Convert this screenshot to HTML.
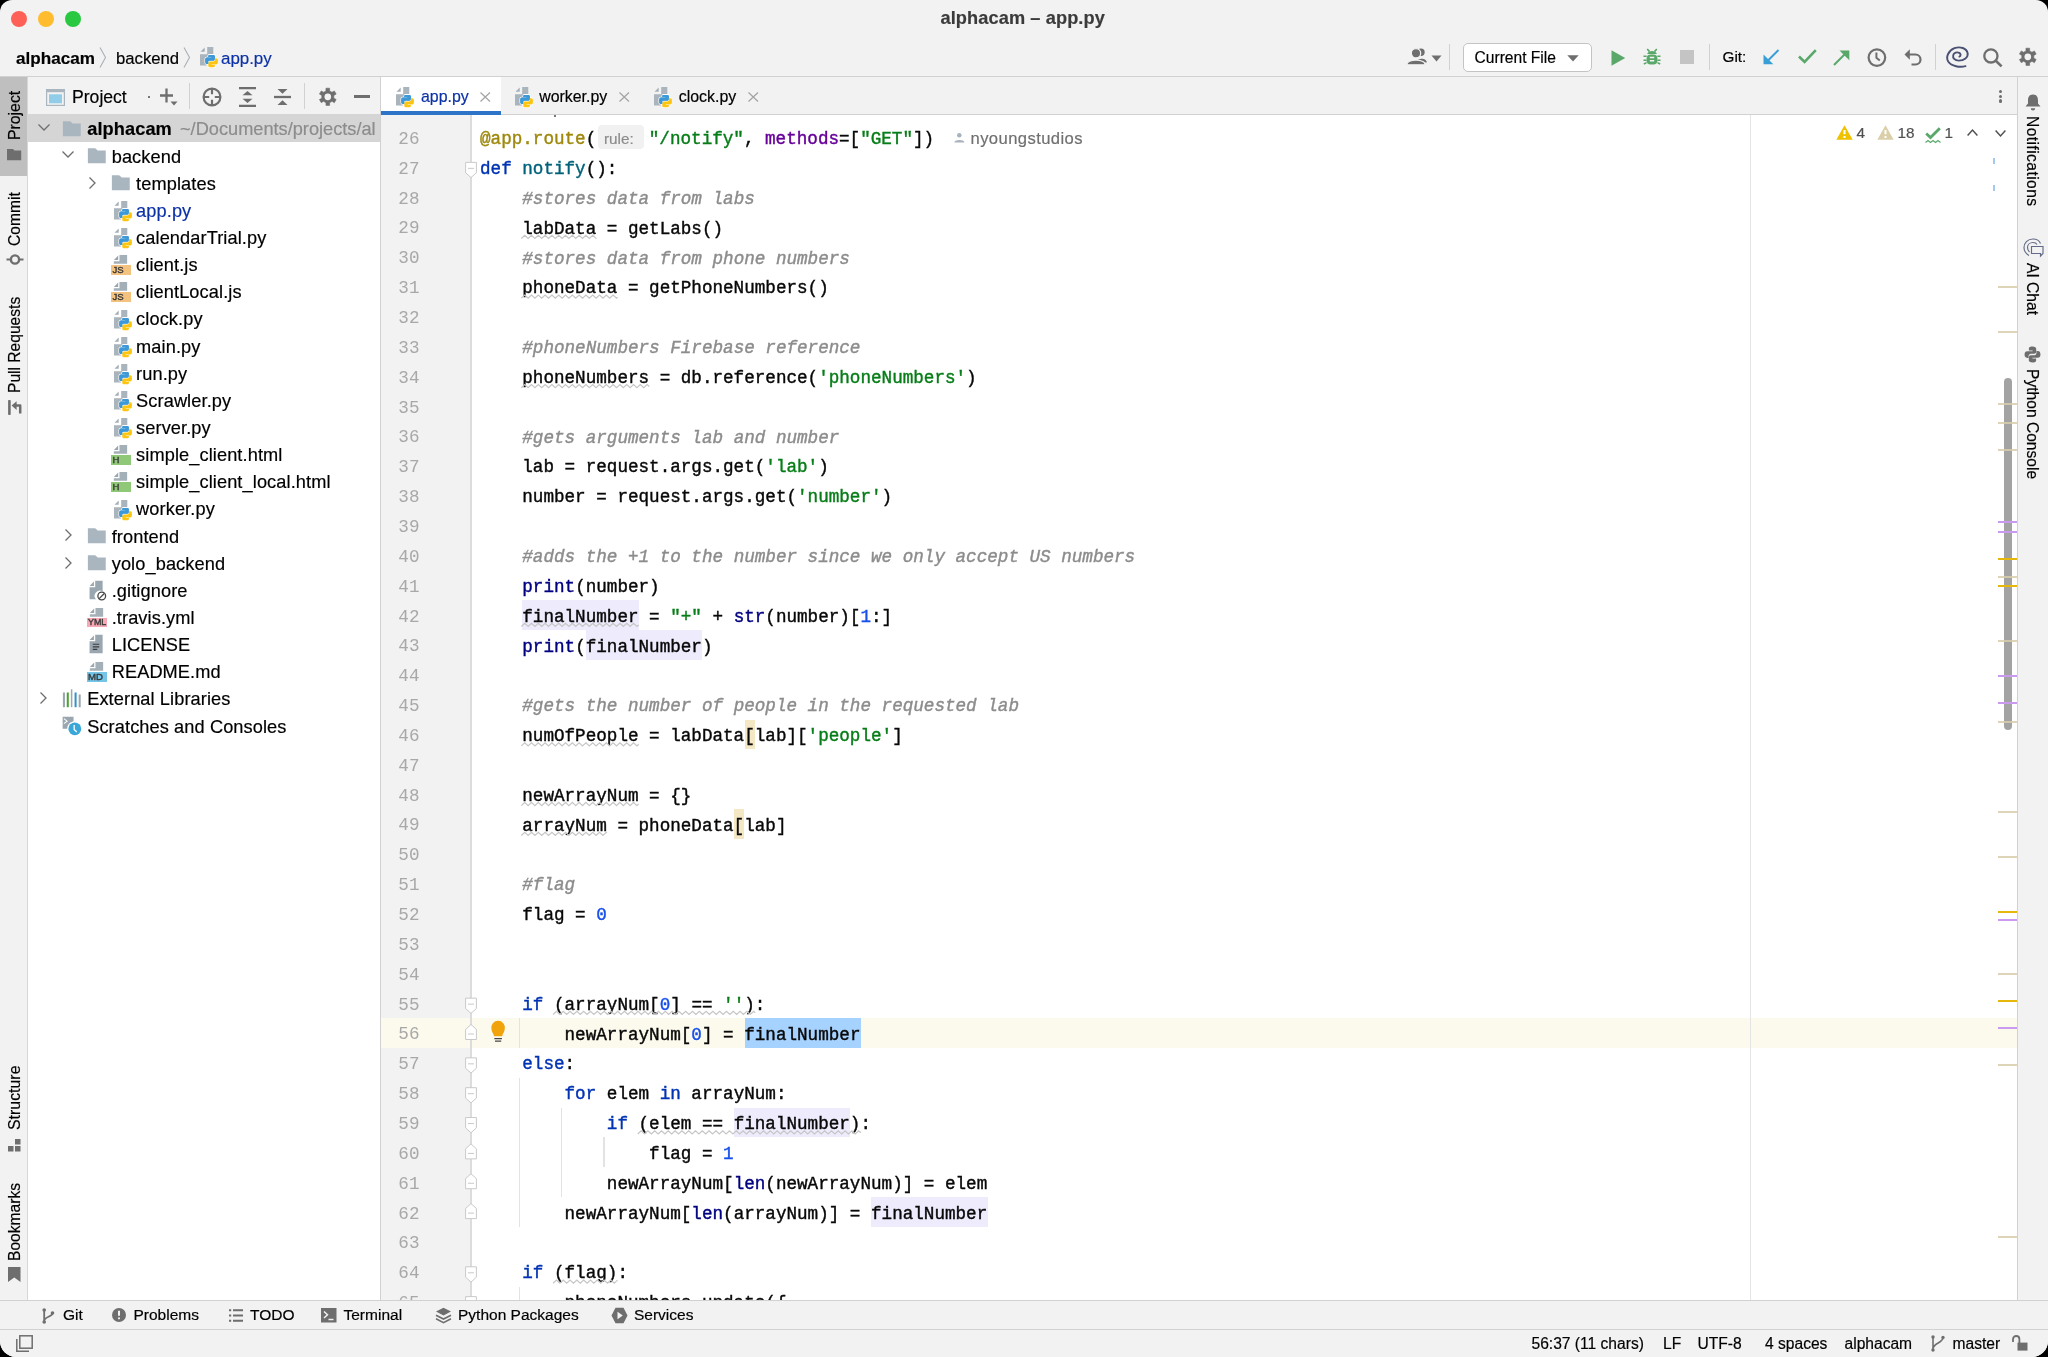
<!DOCTYPE html><html><head><meta charset="utf-8"><style>
*{margin:0;padding:0;box-sizing:border-box}
html,body{width:2048px;height:1357px;overflow:hidden;background:#000}
body{font-family:"Liberation Sans",sans-serif;color:#000;position:relative}
.a{position:absolute}
.win{position:absolute;left:0;top:0;width:2048px;height:1357px;background:#f2f2f2;border-radius:12px 12px 16px 16px;overflow:hidden;will-change:transform}
.t{position:absolute;white-space:pre;line-height:1;-webkit-text-stroke:0.18px currentColor}
.code{-webkit-text-stroke:0.4px currentColor;font-family:"Liberation Mono",monospace;font-size:17.63px;color:#080808;white-space:pre;position:absolute;line-height:29.85px;height:29.85px}
.kw{color:#0033b3}.str{color:#067d17}.num{color:#1750eb}.cm{color:#8c8c8c;font-style:italic}
.dec{color:#9e880d}.fn{color:#00627a}.bi{color:#000080}.kwa{color:#660099}
.ln{font-family:"Liberation Mono",monospace;font-size:17.63px;color:#a3a3a3;position:absolute;white-space:pre;line-height:29.85px;text-align:right;width:40px}
svg{position:absolute;overflow:visible}
</style></head><body><div class="win"><svg width="0" height="0" style="position:absolute">
<defs>
<symbol id="pyf" viewBox="0 0 24 24">
 <path d="M6.5 7.7 L10.7 3.6 V7.7 Z" fill="#a3afb8"/>
 <path d="M13.2 3.1 H19.3 V12 L13 21.6 H6 V10.2 H13.2 Z" fill="#a9b4bc"/>
 <g stroke="#fff" stroke-width="1.6" stroke-linejoin="round" paint-order="stroke">
 <path d="M15.3 10.9 H19.4 Q20.9 10.9 20.9 12.4 V15.3 Q20.9 16.7 19.5 16.7 H15.7 Q14.3 16.7 14.3 18.1 V19.9 H12.8 Q11.3 19.9 11.3 18.2 V15.3 Q11.3 13.6 13 13.6 H17.6 V13.1 H14.3 V12 Q14.3 10.9 15.3 10.9 Z" fill="#3c98d6"/>
 <path d="M19.9 23.2 H15.8 Q14.3 23.2 14.3 21.7 V18.8 Q14.3 17.4 15.7 17.4 H19.5 Q20.9 17.4 20.9 16 V14.2 H22.4 Q23.9 14.2 23.9 15.9 V18.8 Q23.9 20.5 22.2 20.5 H17.6 V21 H20.9 V22.1 Q20.9 23.2 19.9 23.2 Z" fill="#fdc510"/>
 </g>
 <path d="M15.3 10.9 H19.4 Q20.9 10.9 20.9 12.4 V15.3 Q20.9 16.7 19.5 16.7 H15.7 Q14.3 16.7 14.3 18.1 V19.9 H12.8 Q11.3 19.9 11.3 18.2 V15.3 Q11.3 13.6 13 13.6 H17.6 V13.1 H14.3 V12 Q14.3 10.9 15.3 10.9 Z" fill="#3c98d6"/>
</symbol>
<symbol id="fold" viewBox="0 0 16 16">
 <path d="M0.7 1.8 H6.3 Q6.9 1.8 7.3 2.3 L8.5 3.6 H15 V13.8 H0.7 Z" fill="#aab6bf"/>
</symbol>
<symbol id="doc" viewBox="0 0 16 16">
 <path d="M2.2 4.6 L5.6 1.2 V4.6 Z" fill="#9aa7b0"/>
 <path d="M6.6 0.8 H12.6 V7.7 H2.2 V5.6 H6.6 Z" fill="#9aa7b0" fill-opacity=".9"/>
</symbol>
<symbol id="chevR" viewBox="0 0 16 16"><path d="M5.5 2.5 L11 8 L5.5 13.5" fill="none" stroke="#6e6e6e" stroke-width="1.3"/></symbol>
<symbol id="chevD" viewBox="0 0 16 16"><path d="M2.5 5.5 L8 11 L13.5 5.5" fill="none" stroke="#6e6e6e" stroke-width="1.3"/></symbol>
</defs></svg><div class="a" style="left:10.7px;top:10.5px;width:16.6px;height:16.6px;border-radius:50%;background:#fe5f57"></div><div class="a" style="left:37.7px;top:10.5px;width:16.6px;height:16.6px;border-radius:50%;background:#febc2e"></div><div class="a" style="left:64.7px;top:10.5px;width:16.6px;height:16.6px;border-radius:50%;background:#28c840"></div><div class="t" style="left:940.5px;top:9px;font-size:18.2px;letter-spacing:0.1px;font-weight:bold;color:#3b3b3b">alphacam – app.py</div><div class="t" style="left:16px;top:49.5px;font-size:17.1px;font-weight:bold;color:#000">alphacam</div><svg style="left:99px;top:47px" width="8" height="21" viewBox="0 0 8 21"><path d="M1 0.5 L6.5 10.5 L1 20.5" fill="none" stroke="#a8b0b8" stroke-width="1.1"/></svg><div class="t" style="left:116px;top:51px;font-size:16.7px;color:#000">backend</div><svg style="left:183px;top:47px" width="8" height="21" viewBox="0 0 8 21"><path d="M1 0.5 L6.5 10.5 L1 20.5" fill="none" stroke="#a8b0b8" stroke-width="1.1"/></svg><svg style="left:193.5px;top:44.4px" width="24" height="24"><use href="#pyf"/></svg><div class="t" style="left:221px;top:50.5px;font-size:16.9px;color:#0b31a6">app.py</div><div class="a" style="left:0;top:76px;width:2048px;height:1px;background:#d1d1d1"></div><svg style="left:1406px;top:48px" width="22" height="18" viewBox="0 0 22 18"><circle cx="15" cy="4.2" r="3.7" fill="#6e6e6e"/><path d="M11 14 C11 9.5 20.8 9.5 20.8 14.5 Z" fill="#6e6e6e"/><circle cx="10" cy="5.3" r="4.7" fill="#6e6e6e" stroke="#f2f2f2" stroke-width="1.3"/><path d="M0.8 16.8 C0.8 10.5 19.2 10.5 19.2 16.8 Z" fill="#6e6e6e" stroke="#f2f2f2" stroke-width="1.3"/></svg><svg style="left:1431px;top:55px" width="11" height="7" viewBox="0 0 11 7"><path d="M0.5 0.5 H10.5 L5.5 6.5 Z" fill="#6e6e6e"/></svg><div class="a" style="left:1448.5px;top:44px;width:1px;height:26px;background:#d1d1d1"></div><div class="a" style="left:1462.5px;top:42.5px;width:129px;height:29px;border:1px solid #c4c4c4;border-radius:5px;background:#fff"></div><div class="t" style="left:1474.5px;top:50px;font-size:15.6px;color:#000">Current File</div><svg style="left:1567px;top:54.5px" width="12" height="7" viewBox="0 0 12 7"><path d="M0.3 0.3 H11.7 L6 6.6 Z" fill="#6e6e6e"/></svg><svg style="left:1610.5px;top:49.5px" width="15" height="16" viewBox="0 0 15 16"><path d="M0.5 0.2 L14.2 8 L0.5 15.8 Z" fill="#59a869"/></svg><svg style="left:1643px;top:48px" width="18" height="18" viewBox="0 0 18 18"><path d="M4.2 1 L6.5 3.6 M13.8 1 L11.5 3.6" stroke="#59a869" stroke-width="1.6"/><path d="M9 3 C5 3 4.2 6 4.2 6 H13.8 C13.8 6 13 3 9 3Z" fill="#59a869"/><rect x="3.6" y="6.6" width="10.8" height="10" rx="4" fill="#59a869"/><path d="M0.5 8.2 H3.6 M0.5 12.2 H3.6 M0.8 16 L3.6 14.6 M14.4 8.2 H17.5 M14.4 12.2 H17.5 M17.2 16 L14.4 14.6" stroke="#59a869" stroke-width="1.5"/><path d="M6.8 9.6 H11.2 M6.8 12.8 H11.2" stroke="#f2f2f2" stroke-width="1.5"/></svg><div class="a" style="left:1680px;top:50px;width:14.3px;height:13.8px;background:#c4c4c4"></div><div class="a" style="left:1709px;top:44px;width:1px;height:26px;background:#d1d1d1"></div><div class="t" style="left:1722.5px;top:49px;font-size:15.3px;color:#000">Git:</div><svg style="left:1763px;top:49px" width="17" height="16" viewBox="0 0 17 16"><path d="M15.5 1 L3.5 13" stroke="#389fd6" stroke-width="2"/><path d="M0.5 5.5 V15.3 H10.3 Z" fill="#389fd6"/></svg><svg style="left:1798px;top:49px" width="19" height="15" viewBox="0 0 19 15"><path d="M1 7.5 L6.6 13 L17.8 1.2" fill="none" stroke="#59a869" stroke-width="2.6"/></svg><svg style="left:1833px;top:49.5px" width="17" height="16" viewBox="0 0 17 16"><path d="M1 15 L13 3" stroke="#59a869" stroke-width="2"/><path d="M16.3 0.5 V10.3 L6.5 0.5 Z" fill="#59a869"/></svg><svg style="left:1867px;top:47.5px" width="20" height="20" viewBox="0 0 20 20"><circle cx="9.9" cy="9.6" r="8.3" fill="none" stroke="#6e6e6e" stroke-width="2.2"/><path d="M9.4 4.6 V9.8 L12.8 12.6" fill="none" stroke="#6e6e6e" stroke-width="2"/></svg><svg style="left:1904px;top:48px" width="19" height="18" viewBox="0 0 19 18"><path d="M4.8 6.5 H11.5 A5 5 0 0 1 11.5 16.5 H7.5" fill="none" stroke="#6e6e6e" stroke-width="2.2"/><path d="M0.5 6.5 L5.8 1.2 V11.8 Z" fill="#6e6e6e"/></svg><div class="a" style="left:1934.5px;top:43.5px;width:1px;height:26px;background:#d1d1d1"></div><svg style="left:1945.5px;top:46px" width="23" height="22" viewBox="0 0 23 22"><path d="M19.5 20.2 C14 21.5 5.5 20.5 2.2 15.5 C-0.5 11 2.5 4.5 8.5 2.2 C14 0.2 20.5 2 21.6 7 C22.5 11.5 18 14.6 12.8 14.6 C8.5 14.6 6.6 12 7.2 9.2 C7.8 6.6 11 5.8 13.2 6.8 C15 7.6 15 10 13.4 10.6" fill="none" stroke="#4a5173" stroke-width="1.9" stroke-linecap="round"/></svg><svg style="left:1982.5px;top:47.5px" width="20" height="19" viewBox="0 0 20 19"><circle cx="7.9" cy="7.9" r="6.6" fill="none" stroke="#6e6e6e" stroke-width="2.3"/><path d="M12.5 12.5 L18.6 18.4" stroke="#6e6e6e" stroke-width="2.6"/></svg><svg style="left:2018.7px;top:48.2px" width="17.6" height="17.6" viewBox="0 0 17.6 17.6"><path d="M6.98 2.92 L6.97 0.19 L10.63 0.19 L10.62 2.92 L12.99 4.28 L15.34 2.91 L17.17 6.09 L14.81 7.43 L14.81 10.17 L17.17 11.51 L15.34 14.69 L12.99 13.32 L10.62 14.68 L10.63 17.41 L6.97 17.41 L6.98 14.68 L4.61 13.32 L2.26 14.69 L0.43 11.51 L2.79 10.17 L2.79 7.43 L0.43 6.09 L2.26 2.91 L4.61 4.28Z" fill="#6e6e6e" stroke="#6e6e6e" stroke-width="0.6" stroke-linejoin="round"/><circle cx="8.8" cy="8.8" r="3.34" fill="#f2f2f2"/></svg><div class="a" style="left:27px;top:77px;width:1px;height:1223px;background:#d6d6d6"></div><div class="a" style="left:0;top:77px;width:27px;height:99px;background:#bfbfbf"></div><div class="t" style="left:7px;top:139.5px;font-size:15.8px;color:#000;transform-origin:0 0;transform:rotate(-90deg)">Project</div><svg style="left:7px;top:149px" width="15" height="12" viewBox="0 0 15 12"><path d="M0 0 H6 L7.5 1.6 H14.2 V11.2 H0 Z" fill="#6e6e6e"/></svg><div class="t" style="left:7px;top:245.5px;font-size:15.6px;color:#000;transform-origin:0 0;transform:rotate(-90deg)">Commit</div><svg style="left:5.5px;top:251.5px" width="18" height="15" viewBox="0 0 18 15"><circle cx="9" cy="7.5" r="4.1" fill="none" stroke="#6e6e6e" stroke-width="2.4"/><path d="M0.5 7.5 H4.8 M13.2 7.5 H17.5" stroke="#6e6e6e" stroke-width="2.2"/></svg><div class="t" style="left:7px;top:393px;font-size:15.6px;color:#000;transform-origin:0 0;transform:rotate(-90deg)">Pull Requests</div><svg style="left:6px;top:398px" width="18" height="20" viewBox="0 0 18 20"><rect x="2.1" y="2" width="2.6" height="15" rx="0.8" fill="#6e6e6e"/><path d="M5.6 7.6 L10.6 3.2 V12 Z" fill="#6e6e6e"/><path d="M9.5 7.6 H14.2 V15.6" fill="none" stroke="#6e6e6e" stroke-width="2.5" stroke-linejoin="round"/></svg><div class="t" style="left:7px;top:1130px;font-size:15.9px;color:#000;transform-origin:0 0;transform:rotate(-90deg)">Structure</div><svg style="left:8px;top:1138.5px" width="13" height="13" viewBox="0 0 13 13"><rect x="7" y="0" width="5.5" height="5.5" fill="#6e6e6e"/><rect x="0" y="7" width="5.5" height="5.5" fill="#6e6e6e"/><rect x="7" y="7" width="5.5" height="5.5" fill="#6e6e6e"/></svg><div class="t" style="left:7px;top:1260.5px;font-size:15.6px;color:#000;transform-origin:0 0;transform:rotate(-90deg)">Bookmarks</div><svg style="left:8px;top:1267px" width="13" height="15" viewBox="0 0 13 15"><path d="M0 0 H12.5 V15 L6.25 10.5 L0 15 Z" fill="#6e6e6e"/></svg><div class="a" style="left:28px;top:114px;width:352px;height:1186px;background:#fff"></div><div class="a" style="left:28px;top:114px;width:352px;height:28px;background:#d5d5d5"></div><svg style="left:46px;top:88.5px" width="19" height="17" viewBox="0 0 19 17"><rect x="0.6" y="0.6" width="17.8" height="15.8" fill="#f2f2f2" stroke="#aab6bf" stroke-width="1.2"/><rect x="0.6" y="0.6" width="17.8" height="2.6" fill="#aab6bf"/><rect x="3" y="5.3" width="13" height="9" fill="#91cde8"/></svg><div class="t" style="left:72px;top:89px;font-size:17.6px;color:#000">Project</div><div class="a" style="left:148px;top:96px;width:1.5px;height:1.5px;background:#777"></div><svg style="left:160px;top:87.5px" width="18" height="19" viewBox="0 0 18 19"><path d="M6.5 0.5 V14.5 M0 7.5 H13" stroke="#6e6e6e" stroke-width="2.3"/><path d="M10.5 13.5 H17.5 L14 17.5 Z" fill="#6e6e6e"/></svg><div class="a" style="left:188.5px;top:83px;width:1px;height:26px;background:#d1d1d1"></div><svg style="left:201.5px;top:86.5px" width="20" height="20" viewBox="0 0 20 20"><circle cx="10" cy="10" r="8.4" fill="none" stroke="#6e6e6e" stroke-width="2.2"/><path d="M10 2 V7.2 M10 12.8 V18 M2 10 H7.2 M12.8 10 H18" stroke="#6e6e6e" stroke-width="2.2"/></svg><svg style="left:238.5px;top:86.5px" width="17" height="20" viewBox="0 0 17 20"><path d="M0 1.2 H17 M0 18.8 H17" stroke="#6e6e6e" stroke-width="2.3"/><path d="M3.5 8.2 L8.5 4 L13.5 8.2 Z M3.5 11.8 L8.5 16 L13.5 11.8 Z" fill="#6e6e6e"/></svg><svg style="left:273.5px;top:86.5px" width="17" height="20" viewBox="0 0 17 20"><path d="M0 10 H17" stroke="#6e6e6e" stroke-width="2.3"/><path d="M3.5 2 L8.5 6.8 L13.5 2 Z M3.5 18 L8.5 13.2 L13.5 18 Z" fill="#6e6e6e"/></svg><div class="a" style="left:303.8px;top:83px;width:1px;height:26px;background:#d1d1d1"></div><svg style="left:318.5px;top:87.5px" width="17.6" height="17.6" viewBox="0 0 17.6 17.6"><path d="M6.98 2.92 L6.97 0.19 L10.63 0.19 L10.62 2.92 L12.99 4.28 L15.34 2.91 L17.17 6.09 L14.81 7.43 L14.81 10.17 L17.17 11.51 L15.34 14.69 L12.99 13.32 L10.62 14.68 L10.63 17.41 L6.97 17.41 L6.98 14.68 L4.61 13.32 L2.26 14.69 L0.43 11.51 L2.79 10.17 L2.79 7.43 L0.43 6.09 L2.26 2.91 L4.61 4.28Z" fill="#6e6e6e" stroke="#6e6e6e" stroke-width="0.6" stroke-linejoin="round"/><circle cx="8.8" cy="8.8" r="3.34" fill="#f2f2f2"/></svg><div class="a" style="left:354px;top:95.2px;width:16px;height:2.4px;background:#6e6e6e"></div><svg style="left:35.8px;top:119.3px" width="16" height="16"><use href="#chevD"/></svg><svg style="left:62.2px;top:119.0px" width="20" height="20"><use href="#fold"/></svg><div class="t" style="left:87.2px;top:120.4px;font-size:18.2px;letter-spacing:0.1px;font-weight:bold;color:#000">alphacam</div><div class="t" style="left:180px;top:120.4px;font-size:18.2px;color:#8c8c8c">~/Documents/projects/al</div><svg style="left:60.2px;top:146.4px" width="16" height="16"><use href="#chevD"/></svg><svg style="left:86.7px;top:146.1px" width="20" height="20"><use href="#fold"/></svg><div class="t" style="left:111.7px;top:147.5px;font-size:18.2px;letter-spacing:0.1px;font-weight:normal;color:#000">backend</div><svg style="left:83.9px;top:174.6px" width="16" height="16"><use href="#chevR"/></svg><svg style="left:111.1px;top:173.3px" width="20" height="20"><use href="#fold"/></svg><div class="t" style="left:136.1px;top:174.7px;font-size:18.2px;letter-spacing:0.1px;font-weight:normal;color:#000">templates</div><svg style="left:108.0px;top:198.0px" width="24" height="24"><use href="#pyf"/></svg><div class="t" style="left:136.1px;top:201.8px;font-size:18.2px;letter-spacing:0.1px;font-weight:normal;color:#0b31a6">app.py</div><svg style="left:108.0px;top:225.2px" width="24" height="24"><use href="#pyf"/></svg><div class="t" style="left:136.1px;top:229.0px;font-size:18.2px;letter-spacing:0.1px;font-weight:normal;color:#000">calendarTrial.py</div><svg style="left:111.1px;top:254.2px" width="20.5" height="20.5"><use href="#doc"/></svg><div class="a" style="left:111.4px;top:265.3px;width:19.8px;height:9.4px;background:#f4c27f"></div><div class="t" style="left:112.4px;top:265.2px;font-size:9.6px;font-weight:normal;-webkit-text-stroke:0.4px #3a3a3a;color:#3a3a3a">JS</div><div class="t" style="left:136.1px;top:256.1px;font-size:18.2px;letter-spacing:0.1px;font-weight:normal;color:#000">client.js</div><svg style="left:111.1px;top:281.3px" width="20.5" height="20.5"><use href="#doc"/></svg><div class="a" style="left:111.4px;top:292.4px;width:19.8px;height:9.4px;background:#f4c27f"></div><div class="t" style="left:112.4px;top:292.3px;font-size:9.6px;font-weight:normal;-webkit-text-stroke:0.4px #3a3a3a;color:#3a3a3a">JS</div><div class="t" style="left:136.1px;top:283.2px;font-size:18.2px;letter-spacing:0.1px;font-weight:normal;color:#000">clientLocal.js</div><svg style="left:108.0px;top:306.6px" width="24" height="24"><use href="#pyf"/></svg><div class="t" style="left:136.1px;top:310.4px;font-size:18.2px;letter-spacing:0.1px;font-weight:normal;color:#000">clock.py</div><svg style="left:108.0px;top:333.7px" width="24" height="24"><use href="#pyf"/></svg><div class="t" style="left:136.1px;top:337.5px;font-size:18.2px;letter-spacing:0.1px;font-weight:normal;color:#000">main.py</div><svg style="left:108.0px;top:360.9px" width="24" height="24"><use href="#pyf"/></svg><div class="t" style="left:136.1px;top:364.7px;font-size:18.2px;letter-spacing:0.1px;font-weight:normal;color:#000">run.py</div><svg style="left:108.0px;top:388.0px" width="24" height="24"><use href="#pyf"/></svg><div class="t" style="left:136.1px;top:391.8px;font-size:18.2px;letter-spacing:0.1px;font-weight:normal;color:#000">Scrawler.py</div><svg style="left:108.0px;top:415.1px" width="24" height="24"><use href="#pyf"/></svg><div class="t" style="left:136.1px;top:418.9px;font-size:18.2px;letter-spacing:0.1px;font-weight:normal;color:#000">server.py</div><svg style="left:111.1px;top:444.2px" width="20.5" height="20.5"><use href="#doc"/></svg><div class="a" style="left:111.4px;top:455.3px;width:19.8px;height:9.4px;background:#8fc876"></div><div class="t" style="left:112.4px;top:455.2px;font-size:9.6px;font-weight:normal;-webkit-text-stroke:0.4px #3a3a3a;color:#3a3a3a">H</div><div class="t" style="left:136.1px;top:446.1px;font-size:18.2px;letter-spacing:0.1px;font-weight:normal;color:#000">simple_client.html</div><svg style="left:111.1px;top:471.3px" width="20.5" height="20.5"><use href="#doc"/></svg><div class="a" style="left:111.4px;top:482.4px;width:19.8px;height:9.4px;background:#8fc876"></div><div class="t" style="left:112.4px;top:482.3px;font-size:9.6px;font-weight:normal;-webkit-text-stroke:0.4px #3a3a3a;color:#3a3a3a">H</div><div class="t" style="left:136.1px;top:473.2px;font-size:18.2px;letter-spacing:0.1px;font-weight:normal;color:#000">simple_client_local.html</div><svg style="left:108.0px;top:496.6px" width="24" height="24"><use href="#pyf"/></svg><div class="t" style="left:136.1px;top:500.4px;font-size:18.2px;letter-spacing:0.1px;font-weight:normal;color:#000">worker.py</div><svg style="left:59.5px;top:527.4px" width="16" height="16"><use href="#chevR"/></svg><svg style="left:86.7px;top:526.1px" width="20" height="20"><use href="#fold"/></svg><div class="t" style="left:111.7px;top:527.5px;font-size:18.2px;letter-spacing:0.1px;font-weight:normal;color:#000">frontend</div><svg style="left:59.5px;top:554.5px" width="16" height="16"><use href="#chevR"/></svg><svg style="left:86.7px;top:553.2px" width="20" height="20"><use href="#fold"/></svg><div class="t" style="left:111.7px;top:554.6px;font-size:18.2px;letter-spacing:0.1px;font-weight:normal;color:#000">yolo_backend</div><svg style="left:86.7px;top:579.9px" width="20.5" height="20.5" viewBox="0 0 16 16"><path d="M2 4.6 L5.4 1.2 V4.6 Z" fill="#9aa7b0"/><path d="M6.4 0.5 H12.2 V9 A4 4 0 0 0 7 15 H2 V5.6 H6.4 Z" fill="#9aa7b0"/><circle cx="11.5" cy="12.5" r="3" fill="none" stroke="#444" stroke-width="1"/><path d="M9.5 14.5 L13.5 10.5" stroke="#444" stroke-width="1"/></svg><div class="t" style="left:111.7px;top:581.8px;font-size:18.2px;letter-spacing:0.1px;font-weight:normal;color:#000">.gitignore</div><svg style="left:86.7px;top:607.0px" width="20.5" height="20.5"><use href="#doc"/></svg><div class="a" style="left:87.0px;top:618.1px;width:19.8px;height:9.4px;background:#f7a8b4"></div><div class="t" style="left:88.0px;top:618.0px;font-size:8.9px;font-weight:normal;-webkit-text-stroke:0.4px #3a3a3a;color:#3a3a3a">YML</div><div class="t" style="left:111.7px;top:608.9px;font-size:18.2px;letter-spacing:0.1px;font-weight:normal;color:#000">.travis.yml</div><svg style="left:86.7px;top:634.2px" width="20.5" height="20.5" viewBox="0 0 16 16"><path d="M2 4.6 L5.4 1.2 V4.6 Z" fill="#9aa7b0"/><path d="M6.4 0.5 H12.2 V15 H2 V5.6 H6.4 Z" fill="#9aa7b0"/><path d="M4.5 8 H9.5 M4.5 10 H9.5 M4.5 12 H8" stroke="#3c3c3c" stroke-width="0.9"/></svg><div class="t" style="left:111.7px;top:636.1px;font-size:18.2px;letter-spacing:0.1px;font-weight:normal;color:#000">LICENSE</div><svg style="left:86.7px;top:661.3px" width="20.5" height="20.5"><use href="#doc"/></svg><div class="a" style="left:87.0px;top:672.4px;width:19.8px;height:9.4px;background:#75c5e8"></div><div class="t" style="left:88.0px;top:672.3px;font-size:9.6px;font-weight:normal;-webkit-text-stroke:0.4px #3a3a3a;color:#3a3a3a">MD</div><div class="t" style="left:111.7px;top:663.2px;font-size:18.2px;letter-spacing:0.1px;font-weight:normal;color:#000">README.md</div><svg style="left:35.0px;top:690.2px" width="16" height="16"><use href="#chevR"/></svg><svg style="left:62.2px;top:688.4px" width="20.5" height="20.5" viewBox="0 0 16 16"><path d="M1.5 3.5 V15 M13.8 5 V15" stroke="#9aa7b0" stroke-width="1.6"/><path d="M4.5 3.5 V15" stroke="#4aa233" stroke-width="1.6"/><path d="M7.5 1 V15" stroke="#9aa7b0" stroke-width="1.2"/><path d="M10.6 3.5 V15" stroke="#3592c4" stroke-width="1.6"/></svg><div class="t" style="left:87.2px;top:690.3px;font-size:18.2px;letter-spacing:0.1px;font-weight:normal;color:#000">External Libraries</div><svg style="left:62.2px;top:715.6px" width="20.5" height="20.5" viewBox="0 0 16 16"><path d="M0.5 0.5 H9 V4 A6 6 0 0 0 4 10 H0.5 Z" fill="#9aa7b0"/><path d="M1.5 2 L4 4 L1.5 6" fill="none" stroke="#fff" stroke-width=".8"/><circle cx="10" cy="10" r="5" fill="#3aa7d9"/><path d="M9.5 7 V10.5 L11.5 12.5" fill="none" stroke="#fff" stroke-width="1"/></svg><div class="t" style="left:87.2px;top:717.5px;font-size:18.2px;letter-spacing:0.1px;font-weight:normal;color:#000">Scratches and Consoles</div><div class="a" style="left:380px;top:77px;width:1px;height:1223px;background:#d1d1d1"></div><div class="a" style="left:381px;top:115px;width:1637px;height:1185px;background:#fff"></div><div class="a" style="left:381px;top:115px;width:90px;height:1185px;background:#f2f2f2"></div><div class="a" style="left:381px;top:1018.00px;width:1637px;height:29.85px;background:#fcfaed"></div><div class="a" style="left:470.2px;top:115px;width:1.6px;height:1185px;background:#dcdcdc"></div><div class="a" style="left:1750px;top:115px;width:1px;height:1185px;background:#e4e4e4"></div><div class="a" style="left:522.32px;top:600.10px;width:116.38px;height:29.85px;background:#edebfc"></div><div class="a" style="left:585.80px;top:629.95px;width:116.38px;height:29.85px;background:#edebfc"></div><div class="a" style="left:733.92px;top:1107.55px;width:116.38px;height:29.85px;background:#edebfc"></div><div class="a" style="left:871.46px;top:1197.10px;width:116.38px;height:29.85px;background:#edebfc"></div><div class="a" style="left:744.50px;top:1018.00px;width:116.38px;height:29.85px;background:#a6d2ff"></div><div class="a" style="left:744.50px;top:719.50px;width:10.58px;height:29.85px;background:#f4e7c4"></div><div class="a" style="left:733.92px;top:809.05px;width:10.58px;height:29.85px;background:#f4e7c4"></div><div class="a" style="left:518.82px;top:1018.00px;width:1.3px;height:29.85px;background:#e3e3e3"></div><div class="a" style="left:518.82px;top:1077.70px;width:1.3px;height:149.25px;background:#e3e3e3"></div><div class="a" style="left:518.82px;top:1286.65px;width:1.3px;height:13.35px;background:#e3e3e3"></div><div class="a" style="left:561.14px;top:1107.55px;width:1.3px;height:89.55px;background:#e3e3e3"></div><div class="a" style="left:603.46px;top:1137.40px;width:1.3px;height:29.85px;background:#e3e3e3"></div><div class="a" style="left:597.5px;top:125px;width:46.8px;height:23.6px;border-radius:4px;background:#f1f1f1"></div><div class="t" style="left:604px;top:130.5px;font-size:15.3px;color:#8c8c8c">rule:</div><div class="code" style="left:480.0px;top:125.10px"><span class="dec">@app.route</span>(</div><div class="code" style="left:648.8px;top:125.10px"><span class="str">&quot;/notify&quot;</span>, <span class="kwa">methods</span>=[<span class="str">&quot;GET&quot;</span>])</div><svg style="left:954px;top:132px" width="11" height="11" viewBox="0 0 11 11"><circle cx="5.3" cy="3.2" r="2.3" fill="#a9b3bd"/><path d="M0.3 10.5 C0.5 7.2 10.3 7.2 10.5 10.5 Z" fill="#a9b3bd"/></svg><div class="t" style="left:970.5px;top:130.5px;font-size:16.6px;letter-spacing:0.42px;color:#707070">nyoungstudios</div><div class="code" style="left:480.0px;top:154.95px"><span class="kw">def</span> <span class="fn">notify</span>():</div><div class="code" style="left:480.0px;top:184.80px">    <span class="cm">#stores data from labs</span></div><div class="code" style="left:480.0px;top:214.65px">    labData = getLabs()</div><div class="code" style="left:480.0px;top:244.50px">    <span class="cm">#stores data from phone numbers</span></div><div class="code" style="left:480.0px;top:274.35px">    phoneData = getPhoneNumbers()</div><div class="code" style="left:480.0px;top:304.20px"></div><div class="code" style="left:480.0px;top:334.05px">    <span class="cm">#phoneNumbers Firebase reference</span></div><div class="code" style="left:480.0px;top:363.90px">    phoneNumbers = db.reference(<span class="str">&#x27;phoneNumbers&#x27;</span>)</div><div class="code" style="left:480.0px;top:393.75px"></div><div class="code" style="left:480.0px;top:423.60px">    <span class="cm">#gets arguments lab and number</span></div><div class="code" style="left:480.0px;top:453.45px">    lab = request.args.get(<span class="str">&#x27;lab&#x27;</span>)</div><div class="code" style="left:480.0px;top:483.30px">    number = request.args.get(<span class="str">&#x27;number&#x27;</span>)</div><div class="code" style="left:480.0px;top:513.15px"></div><div class="code" style="left:480.0px;top:543.00px">    <span class="cm">#adds the +1 to the number since we only accept US numbers</span></div><div class="code" style="left:480.0px;top:572.85px">    <span class="bi">print</span>(number)</div><div class="code" style="left:480.0px;top:602.70px">    finalNumber = <span class="str">&quot;+&quot;</span> + <span class="bi">str</span>(number)[<span class="num">1</span>:]</div><div class="code" style="left:480.0px;top:632.55px">    <span class="bi">print</span>(finalNumber)</div><div class="code" style="left:480.0px;top:662.40px"></div><div class="code" style="left:480.0px;top:692.25px">    <span class="cm">#gets the number of people in the requested lab</span></div><div class="code" style="left:480.0px;top:722.10px">    numOfPeople = labData[lab][<span class="str">&#x27;people&#x27;</span>]</div><div class="code" style="left:480.0px;top:751.95px"></div><div class="code" style="left:480.0px;top:781.80px">    newArrayNum = {}</div><div class="code" style="left:480.0px;top:811.65px">    arrayNum = phoneData[lab]</div><div class="code" style="left:480.0px;top:841.50px"></div><div class="code" style="left:480.0px;top:871.35px">    <span class="cm">#flag</span></div><div class="code" style="left:480.0px;top:901.20px">    flag = <span class="num">0</span></div><div class="code" style="left:480.0px;top:931.05px"></div><div class="code" style="left:480.0px;top:960.90px"></div><div class="code" style="left:480.0px;top:990.75px">    <span class="kw">if</span> (arrayNum[<span class="num">0</span>] == <span class="str">&#x27;&#x27;</span>):</div><div class="code" style="left:480.0px;top:1020.60px">        newArrayNum[<span class="num">0</span>] = finalNumber</div><div class="code" style="left:480.0px;top:1050.45px">    <span class="kw">else</span>:</div><div class="code" style="left:480.0px;top:1080.30px">        <span class="kw">for</span> elem <span class="kw">in</span> arrayNum:</div><div class="code" style="left:480.0px;top:1110.15px">            <span class="kw">if</span> (elem == finalNumber):</div><div class="code" style="left:480.0px;top:1140.00px">                flag = <span class="num">1</span></div><div class="code" style="left:480.0px;top:1169.85px">            newArrayNum[<span class="bi">len</span>(newArrayNum)] = elem</div><div class="code" style="left:480.0px;top:1199.70px">        newArrayNum[<span class="bi">len</span>(arrayNum)] = finalNumber</div><div class="code" style="left:480.0px;top:1229.55px"></div><div class="code" style="left:480.0px;top:1259.40px">    <span class="kw">if</span> (flag):</div><div class="code" style="left:480.0px;top:1289.25px">        phoneNumbers.update({</div><div class="a" style="left:553.5px;top:115px;width:2px;height:2px;background:#777"></div><div class="ln" style="left:379.5px;top:124.90px;color:#a8a8a8">26</div><div class="ln" style="left:379.5px;top:154.75px;color:#a8a8a8">27</div><div class="ln" style="left:379.5px;top:184.60px;color:#a8a8a8">28</div><div class="ln" style="left:379.5px;top:214.45px;color:#a8a8a8">29</div><div class="ln" style="left:379.5px;top:244.30px;color:#a8a8a8">30</div><div class="ln" style="left:379.5px;top:274.15px;color:#a8a8a8">31</div><div class="ln" style="left:379.5px;top:304.00px;color:#a8a8a8">32</div><div class="ln" style="left:379.5px;top:333.85px;color:#a8a8a8">33</div><div class="ln" style="left:379.5px;top:363.70px;color:#a8a8a8">34</div><div class="ln" style="left:379.5px;top:393.55px;color:#a8a8a8">35</div><div class="ln" style="left:379.5px;top:423.40px;color:#a8a8a8">36</div><div class="ln" style="left:379.5px;top:453.25px;color:#a8a8a8">37</div><div class="ln" style="left:379.5px;top:483.10px;color:#a8a8a8">38</div><div class="ln" style="left:379.5px;top:512.95px;color:#a8a8a8">39</div><div class="ln" style="left:379.5px;top:542.80px;color:#a8a8a8">40</div><div class="ln" style="left:379.5px;top:572.65px;color:#a8a8a8">41</div><div class="ln" style="left:379.5px;top:602.50px;color:#a8a8a8">42</div><div class="ln" style="left:379.5px;top:632.35px;color:#a8a8a8">43</div><div class="ln" style="left:379.5px;top:662.20px;color:#a8a8a8">44</div><div class="ln" style="left:379.5px;top:692.05px;color:#a8a8a8">45</div><div class="ln" style="left:379.5px;top:721.90px;color:#a8a8a8">46</div><div class="ln" style="left:379.5px;top:751.75px;color:#a8a8a8">47</div><div class="ln" style="left:379.5px;top:781.60px;color:#a8a8a8">48</div><div class="ln" style="left:379.5px;top:811.45px;color:#a8a8a8">49</div><div class="ln" style="left:379.5px;top:841.30px;color:#a8a8a8">50</div><div class="ln" style="left:379.5px;top:871.15px;color:#a8a8a8">51</div><div class="ln" style="left:379.5px;top:901.00px;color:#a8a8a8">52</div><div class="ln" style="left:379.5px;top:930.85px;color:#a8a8a8">53</div><div class="ln" style="left:379.5px;top:960.70px;color:#a8a8a8">54</div><div class="ln" style="left:379.5px;top:990.55px;color:#a8a8a8">55</div><div class="ln" style="left:379.5px;top:1020.40px;color:#a8a8a8">56</div><div class="ln" style="left:379.5px;top:1050.25px;color:#a8a8a8">57</div><div class="ln" style="left:379.5px;top:1080.10px;color:#a8a8a8">58</div><div class="ln" style="left:379.5px;top:1109.95px;color:#a8a8a8">59</div><div class="ln" style="left:379.5px;top:1139.80px;color:#a8a8a8">60</div><div class="ln" style="left:379.5px;top:1169.65px;color:#a8a8a8">61</div><div class="ln" style="left:379.5px;top:1199.50px;color:#a8a8a8">62</div><div class="ln" style="left:379.5px;top:1229.35px;color:#a8a8a8">63</div><div class="ln" style="left:379.5px;top:1259.20px;color:#a8a8a8">64</div><div class="ln" style="left:379.5px;top:1289.05px;color:#a8a8a8">65</div><svg style="left:0;top:0" width="2048" height="1357"><path d="M521.32 238.45 L524.72 235.25 L528.12 238.45 L531.52 235.25 L534.92 238.45 L538.32 235.25 L541.72 238.45 L545.12 235.25 L548.52 238.45 L551.92 235.25 L555.32 238.45 L558.72 235.25 L562.12 238.45 L565.52 235.25 L568.92 238.45 L572.32 235.25 L575.72 238.45 L579.12 235.25 L582.52 238.45 L585.92 235.25 L589.32 238.45 L592.72 235.25 L596.12 238.45 L596.38 238.21" fill="none" stroke="#c6c6c6" stroke-width="1.2"/><path d="M521.32 298.15 L524.72 294.95 L528.12 298.15 L531.52 294.95 L534.92 298.15 L538.32 294.95 L541.72 298.15 L545.12 294.95 L548.52 298.15 L551.92 294.95 L555.32 298.15 L558.72 294.95 L562.12 298.15 L565.52 294.95 L568.92 298.15 L572.32 294.95 L575.72 298.15 L579.12 294.95 L582.52 298.15 L585.92 294.95 L589.32 298.15 L592.72 294.95 L596.12 298.15 L599.52 294.95 L602.92 298.15 L606.32 294.95 L609.72 298.15 L613.12 294.95 L616.52 298.15 L617.54 297.19" fill="none" stroke="#c6c6c6" stroke-width="1.2"/><path d="M521.32 387.70 L524.72 384.50 L528.12 387.70 L531.52 384.50 L534.92 387.70 L538.32 384.50 L541.72 387.70 L545.12 384.50 L548.52 387.70 L551.92 384.50 L555.32 387.70 L558.72 384.50 L562.12 387.70 L565.52 384.50 L568.92 387.70 L572.32 384.50 L575.72 387.70 L579.12 384.50 L582.52 387.70 L585.92 384.50 L589.32 387.70 L592.72 384.50 L596.12 387.70 L599.52 384.50 L602.92 387.70 L606.32 384.50 L609.72 387.70 L613.12 384.50 L616.52 387.70 L619.92 384.50 L623.32 387.70 L626.72 384.50 L630.12 387.70 L633.52 384.50 L636.92 387.70 L640.32 384.50 L643.72 387.70 L647.12 384.50 L649.28 386.53" fill="none" stroke="#c6c6c6" stroke-width="1.2"/><path d="M521.32 626.50 L524.72 623.30 L528.12 626.50 L531.52 623.30 L534.92 626.50 L538.32 623.30 L541.72 626.50 L545.12 623.30 L548.52 626.50 L551.92 623.30 L555.32 626.50 L558.72 623.30 L562.12 626.50 L565.52 623.30 L568.92 626.50 L572.32 623.30 L575.72 626.50 L579.12 623.30 L582.52 626.50 L585.92 623.30 L589.32 626.50 L592.72 623.30 L596.12 626.50 L599.52 623.30 L602.92 626.50 L606.32 623.30 L609.72 626.50 L613.12 623.30 L616.52 626.50 L619.92 623.30 L623.32 626.50 L626.72 623.30 L630.12 626.50 L633.52 623.30 L636.92 626.50 L638.70 624.82" fill="none" stroke="#c6c6c6" stroke-width="1.2"/><path d="M521.32 745.90 L524.72 742.70 L528.12 745.90 L531.52 742.70 L534.92 745.90 L538.32 742.70 L541.72 745.90 L545.12 742.70 L548.52 745.90 L551.92 742.70 L555.32 745.90 L558.72 742.70 L562.12 745.90 L565.52 742.70 L568.92 745.90 L572.32 742.70 L575.72 745.90 L579.12 742.70 L582.52 745.90 L585.92 742.70 L589.32 745.90 L592.72 742.70 L596.12 745.90 L599.52 742.70 L602.92 745.90 L606.32 742.70 L609.72 745.90 L613.12 742.70 L616.52 745.90 L619.92 742.70 L623.32 745.90 L626.72 742.70 L630.12 745.90 L633.52 742.70 L636.92 745.90 L638.70 744.22" fill="none" stroke="#c6c6c6" stroke-width="1.2"/><path d="M521.32 805.60 L524.72 802.40 L528.12 805.60 L531.52 802.40 L534.92 805.60 L538.32 802.40 L541.72 805.60 L545.12 802.40 L548.52 805.60 L551.92 802.40 L555.32 805.60 L558.72 802.40 L562.12 805.60 L565.52 802.40 L568.92 805.60 L572.32 802.40 L575.72 805.60 L579.12 802.40 L582.52 805.60 L585.92 802.40 L589.32 805.60 L592.72 802.40 L596.12 805.60 L599.52 802.40 L602.92 805.60 L606.32 802.40 L609.72 805.60 L613.12 802.40 L616.52 805.60 L619.92 802.40 L623.32 805.60 L626.72 802.40 L630.12 805.60 L633.52 802.40 L636.92 805.60 L638.70 803.92" fill="none" stroke="#c6c6c6" stroke-width="1.2"/><path d="M521.32 835.45 L524.72 832.25 L528.12 835.45 L531.52 832.25 L534.92 835.45 L538.32 832.25 L541.72 835.45 L545.12 832.25 L548.52 835.45 L551.92 832.25 L555.32 835.45 L558.72 832.25 L562.12 835.45 L565.52 832.25 L568.92 835.45 L572.32 832.25 L575.72 835.45 L579.12 832.25 L582.52 835.45 L585.92 832.25 L589.32 835.45 L592.72 832.25 L596.12 835.45 L599.52 832.25 L602.92 835.45 L606.32 832.25 L606.96 832.85" fill="none" stroke="#c6c6c6" stroke-width="1.2"/><path d="M553.06 1014.55 L556.46 1011.35 L559.86 1014.55 L563.26 1011.35 L566.66 1014.55 L570.06 1011.35 L573.46 1014.55 L576.86 1011.35 L580.26 1014.55 L583.66 1011.35 L587.06 1014.55 L590.46 1011.35 L593.86 1014.55 L597.26 1011.35 L600.66 1014.55 L604.06 1011.35 L607.46 1014.55 L610.86 1011.35 L614.26 1014.55 L617.66 1011.35 L621.06 1014.55 L624.46 1011.35 L627.86 1014.55 L631.26 1011.35 L634.66 1014.55 L638.06 1011.35 L641.46 1014.55 L644.86 1011.35 L648.26 1014.55 L651.66 1011.35 L655.06 1014.55 L658.46 1011.35 L661.86 1014.55 L665.26 1011.35 L668.66 1014.55 L672.06 1011.35 L675.46 1014.55 L678.86 1011.35 L682.26 1014.55 L685.66 1011.35 L689.06 1014.55 L692.46 1011.35 L695.86 1014.55 L699.26 1011.35 L702.66 1014.55 L706.06 1011.35 L709.46 1014.55 L712.86 1011.35 L716.26 1014.55 L719.66 1011.35 L723.06 1014.55 L726.46 1011.35 L729.86 1014.55 L733.26 1011.35 L736.66 1014.55 L740.06 1011.35 L743.46 1014.55 L746.86 1011.35 L750.26 1014.55 L753.66 1011.35 L755.08 1012.69" fill="none" stroke="#c6c6c6" stroke-width="1.2"/><path d="M637.70 1133.95 L641.10 1130.75 L644.50 1133.95 L647.90 1130.75 L651.30 1133.95 L654.70 1130.75 L658.10 1133.95 L661.50 1130.75 L664.90 1133.95 L668.30 1130.75 L671.70 1133.95 L675.10 1130.75 L678.50 1133.95 L681.90 1130.75 L685.30 1133.95 L688.70 1130.75 L692.10 1133.95 L695.50 1130.75 L698.90 1133.95 L702.30 1130.75 L705.70 1133.95 L709.10 1130.75 L712.50 1133.95 L715.90 1130.75 L719.30 1133.95 L722.70 1130.75 L726.10 1133.95 L729.50 1130.75 L732.90 1133.95 L736.30 1130.75 L739.70 1133.95 L743.10 1130.75 L746.50 1133.95 L749.90 1130.75 L753.30 1133.95 L756.70 1130.75 L760.10 1133.95 L763.50 1130.75 L766.90 1133.95 L770.30 1130.75 L773.70 1133.95 L777.10 1130.75 L780.50 1133.95 L783.90 1130.75 L787.30 1133.95 L790.70 1130.75 L794.10 1133.95 L797.50 1130.75 L800.90 1133.95 L804.30 1130.75 L807.70 1133.95 L811.10 1130.75 L814.50 1133.95 L817.90 1130.75 L821.30 1133.95 L824.70 1130.75 L828.10 1133.95 L831.50 1130.75 L834.90 1133.95 L838.30 1130.75 L841.70 1133.95 L845.10 1130.75 L848.50 1133.95 L851.90 1130.75 L855.30 1133.95 L858.70 1130.75 L860.88 1132.80" fill="none" stroke="#c6c6c6" stroke-width="1.2"/><path d="M553.06 1283.20 L556.46 1280.00 L559.86 1283.20 L563.26 1280.00 L566.66 1283.20 L570.06 1280.00 L573.46 1283.20 L576.86 1280.00 L580.26 1283.20 L583.66 1280.00 L587.06 1283.20 L590.46 1280.00 L593.86 1283.20 L597.26 1280.00 L600.66 1283.20 L604.06 1280.00 L607.46 1283.20 L610.86 1280.00 L614.26 1283.20 L617.54 1280.11" fill="none" stroke="#c6c6c6" stroke-width="1.2"/><path d="M465.6 162.35 H476.4 V172.75 L471 177.55 L465.6 172.75 Z" fill="#fff" stroke="#c9c9c9" stroke-width="1"/><path d="M468 168.35 H474" stroke="#c9c9c9" stroke-width="1"/><path d="M465.6 998.15 H476.4 V1008.55 L471 1013.35 L465.6 1008.55 Z" fill="#fff" stroke="#c9c9c9" stroke-width="1"/><path d="M468 1004.15 H474" stroke="#c9c9c9" stroke-width="1"/><path d="M465.6 1057.85 H476.4 V1068.25 L471 1073.05 L465.6 1068.25 Z" fill="#fff" stroke="#c9c9c9" stroke-width="1"/><path d="M468 1063.85 H474" stroke="#c9c9c9" stroke-width="1"/><path d="M465.6 1087.70 H476.4 V1098.10 L471 1102.90 L465.6 1098.10 Z" fill="#fff" stroke="#c9c9c9" stroke-width="1"/><path d="M468 1093.70 H474" stroke="#c9c9c9" stroke-width="1"/><path d="M465.6 1117.55 H476.4 V1127.95 L471 1132.75 L465.6 1127.95 Z" fill="#fff" stroke="#c9c9c9" stroke-width="1"/><path d="M468 1123.55 H474" stroke="#c9c9c9" stroke-width="1"/><path d="M465.6 1266.80 H476.4 V1277.20 L471 1282.00 L465.6 1277.20 Z" fill="#fff" stroke="#c9c9c9" stroke-width="1"/><path d="M468 1272.80 H474" stroke="#c9c9c9" stroke-width="1"/><path d="M465.6 1296.65 H476.4 V1307.05 L471 1311.85 L465.6 1307.05 Z" fill="#fff" stroke="#c9c9c9" stroke-width="1"/><path d="M468 1302.65 H474" stroke="#c9c9c9" stroke-width="1"/><path d="M465.6 1039.50 H476.4 V1029.40 L471 1024.50 L465.6 1029.40 Z" fill="#fff" stroke="#c9c9c9" stroke-width="1"/><path d="M468 1034.00 H474" stroke="#c9c9c9" stroke-width="1"/><path d="M465.6 1158.90 H476.4 V1148.80 L471 1143.90 L465.6 1148.80 Z" fill="#fff" stroke="#c9c9c9" stroke-width="1"/><path d="M468 1153.40 H474" stroke="#c9c9c9" stroke-width="1"/><path d="M465.6 1188.75 H476.4 V1178.65 L471 1173.75 L465.6 1178.65 Z" fill="#fff" stroke="#c9c9c9" stroke-width="1"/><path d="M468 1183.25 H474" stroke="#c9c9c9" stroke-width="1"/><path d="M465.6 1218.60 H476.4 V1208.50 L471 1203.60 L465.6 1208.50 Z" fill="#fff" stroke="#c9c9c9" stroke-width="1"/><path d="M468 1213.10 H474" stroke="#c9c9c9" stroke-width="1"/><circle cx="498.1" cy="1028.90" r="7.6" fill="#fff" opacity=".9"/><path d="M491.4 1028.80 A6.8 6.8 0 1 1 504.8 1028.80 C504.8 1032.00 502.6 1033.50 502.2 1036.30 H494 C493.6 1033.50 491.4 1032.00 491.4 1028.80 Z" fill="#f0a30a"/><path d="M494.3 1038.60 H501.9 M495 1041.20 H501.2" stroke="#444" stroke-width="1.3"/></svg><div class="a" style="left:381px;top:114px;width:1637px;height:1px;background:#d1d1d1"></div><div class="a" style="left:381px;top:77px;width:120px;height:37px;background:#fff"></div><div class="a" style="left:381px;top:111px;width:120px;height:4px;background:#2d73c8"></div><svg style="left:390.2px;top:83.9px" width="24" height="24"><use href="#pyf"/></svg><div class="t" style="left:421px;top:89.2px;font-size:15.9px;color:#0b31a6">app.py</div><svg style="left:479.6px;top:92px" width="10.5" height="10" viewBox="0 0 10.5 10"><path d="M0.5 0.5 L10 9.5 M10 0.5 L0.5 9.5" stroke="#a3a3a3" stroke-width="1.2"/></svg><svg style="left:508.6px;top:83.9px" width="24" height="24"><use href="#pyf"/></svg><div class="t" style="left:539.2px;top:89.2px;font-size:15.9px;color:#000">worker.py</div><svg style="left:619.3px;top:92px" width="10.5" height="10" viewBox="0 0 10.5 10"><path d="M0.5 0.5 L10 9.5 M10 0.5 L0.5 9.5" stroke="#a3a3a3" stroke-width="1.2"/></svg><svg style="left:648.0px;top:83.9px" width="24" height="24"><use href="#pyf"/></svg><div class="t" style="left:678.8px;top:89.2px;font-size:15.9px;color:#000">clock.py</div><svg style="left:748.2px;top:92px" width="10.5" height="10" viewBox="0 0 10.5 10"><path d="M0.5 0.5 L10 9.5 M10 0.5 L0.5 9.5" stroke="#a3a3a3" stroke-width="1.2"/></svg><div class="a" style="left:2017px;top:77px;width:1px;height:1223px;background:#d1d1d1"></div><div class="a" style="left:1998.8px;top:89.7px;width:3.6px;height:3.6px;border-radius:50%;background:#6e6e6e"></div><div class="a" style="left:1998.8px;top:94.5px;width:3.6px;height:3.6px;border-radius:50%;background:#6e6e6e"></div><div class="a" style="left:1998.8px;top:99.3px;width:3.6px;height:3.6px;border-radius:50%;background:#6e6e6e"></div><svg style="left:2024.5px;top:93.5px" width="16" height="17" viewBox="0 0 16 17"><path d="M8 0.5 C4 0.5 3 3.5 3 6.5 V9.5 L0.5 12.6 H15.5 L13 9.5 V6.5 C13 3.5 12 0.5 8 0.5 Z" fill="#6e6e6e"/><path d="M5.8 14.2 H10.2 A2.2 2.2 0 0 1 5.8 14.2 Z" fill="#6e6e6e"/></svg><div class="t" style="left:2039.5px;top:115.5px;font-size:15.6px;letter-spacing:0.43px;color:#000;transform-origin:0 0;transform:rotate(90deg)">Notifications</div><svg style="left:2023px;top:237.5px" width="21" height="19" viewBox="0 0 21 19"><path d="M6 17.5 C2.5 15.5 1 12.5 1 9.5 C1 5 4.5 1 10 1 C14 1 16.5 3 17.5 5.5" fill="none" stroke="#646b86" stroke-width="1.15"/><path d="M6.5 14 C5 12.5 4.5 11 4.5 9.5 C4.5 6.5 7 4.5 10 4.5 C12 4.5 13.5 5.5 14 6.5" fill="none" stroke="#646b86" stroke-width="1.15"/><path d="M8.5 8.5 H20 V15.5 L17.5 18 V15.5 H8.5 Z" fill="#f2f2f2" stroke="#646b86" stroke-width="1.15"/></svg><div class="t" style="left:2039.5px;top:263px;font-size:15.6px;color:#000;transform-origin:0 0;transform:rotate(90deg)">AI Chat</div><svg style="left:2024px;top:345.5px" width="17" height="17" viewBox="0 0 16 16"><path d="M7.8 0.5 C5 0.5 4.6 1.7 4.6 2.6 V4.3 H8.1 V5 H3 C1.5 5 0.5 6.1 0.5 8.1 C0.5 10.1 1.5 11.2 3 11.2 H4.3 V9.5 C4.3 8.2 5.3 7.3 6.6 7.3 H9.6 C10.7 7.3 11.5 6.5 11.5 5.4 V2.6 C11.5 1.5 10.5 0.5 7.8 0.5 Z" fill="#6e6e6e"/><path d="M8.2 15.5 C11 15.5 11.4 14.3 11.4 13.4 V11.7 H7.9 V11 H13 C14.5 11 15.5 9.9 15.5 7.9 C15.5 5.9 14.5 4.8 13 4.8 H11.7 V6.5 C11.7 7.8 10.7 8.7 9.4 8.7 H6.4 C5.3 8.7 4.5 9.5 4.5 10.6 V13.4 C4.5 14.5 5.5 15.5 8.2 15.5 Z" fill="#6e6e6e"/></svg><div class="t" style="left:2039.5px;top:369px;font-size:15.6px;color:#000;transform-origin:0 0;transform:rotate(90deg)">Python Console</div><svg style="left:1836px;top:125px" width="17" height="15" viewBox="0 0 17 15"><path d="M8.5 0.3 L16.7 14.7 H0.3 Z" fill="#eec200"/><path d="M8.5 5 V9.2 M8.5 11 V13" stroke="#fff" stroke-width="2"/></svg><div class="t" style="left:1856.5px;top:125px;font-size:15.3px;color:#505050">4</div><svg style="left:1877px;top:125px" width="17" height="15" viewBox="0 0 17 15"><path d="M8.5 0.3 L16.7 14.7 H0.3 Z" fill="#dacfa8"/><path d="M8.5 5 V9.2 M8.5 11 V13" stroke="#fff" stroke-width="2"/></svg><div class="t" style="left:1897.5px;top:125px;font-size:15.3px;color:#505050">18</div><svg style="left:1924.5px;top:126.5px" width="16" height="17" viewBox="0 0 16 17"><path d="M1.2 6.5 L5.5 10.5 L14.8 1.2" fill="none" stroke="#59a869" stroke-width="2.8"/><path d="M0.5 15.5 L3 13.5 L5.5 15.5 L8 13.5 L10.5 15.5 L13 13.5 L15.5 15.5" fill="none" stroke="#59a869" stroke-width="1.1"/></svg><div class="t" style="left:1944.5px;top:125px;font-size:15.3px;color:#505050">1</div><svg style="left:1966.5px;top:129px" width="11" height="7" viewBox="0 0 11 7"><path d="M0.6 6.4 L5.5 1 L10.4 6.4" fill="none" stroke="#505050" stroke-width="1.5"/></svg><svg style="left:1995px;top:130px" width="11" height="7" viewBox="0 0 11 7"><path d="M0.6 0.6 L5.5 6 L10.4 0.6" fill="none" stroke="#505050" stroke-width="1.5"/></svg><div class="a" style="left:1992.5px;top:157.5px;width:2.3px;height:6px;background:#a6c8ef"></div><div class="a" style="left:1992.5px;top:185px;width:2.3px;height:6px;background:#a6c8ef"></div><div class="a" style="left:2003.5px;top:377.5px;width:8.8px;height:352px;border-radius:4.4px;background:#a3a3a3"></div><div class="a" style="left:1998px;top:286.2px;width:19px;height:2px;background:#d8ccaa;opacity:.85"></div><div class="a" style="left:1998px;top:331.3px;width:19px;height:2px;background:#d8ccaa;opacity:.85"></div><div class="a" style="left:1998px;top:403.0px;width:19px;height:2px;background:#d8ccaa;opacity:.85"></div><div class="a" style="left:1998px;top:422.3px;width:19px;height:2px;background:#d8ccaa;opacity:.85"></div><div class="a" style="left:1998px;top:449.3px;width:19px;height:2px;background:#d8ccaa;opacity:.85"></div><div class="a" style="left:1998px;top:575.6px;width:19px;height:2px;background:#d8ccaa;opacity:.85"></div><div class="a" style="left:1998px;top:639.6px;width:19px;height:2px;background:#d8ccaa;opacity:.85"></div><div class="a" style="left:1998px;top:721.0px;width:19px;height:2px;background:#d8ccaa;opacity:.85"></div><div class="a" style="left:1998px;top:810.5px;width:19px;height:2px;background:#d8ccaa;opacity:.85"></div><div class="a" style="left:1998px;top:856.2px;width:19px;height:2px;background:#d8ccaa;opacity:.85"></div><div class="a" style="left:1998px;top:973.3px;width:19px;height:2px;background:#d8ccaa;opacity:.85"></div><div class="a" style="left:1998px;top:1063.9px;width:19px;height:2px;background:#d8ccaa;opacity:.85"></div><div class="a" style="left:1998px;top:1236.3px;width:19px;height:2px;background:#d8ccaa;opacity:.85"></div><div class="a" style="left:1998px;top:521.4px;width:19px;height:2px;background:#c99af0"></div><div class="a" style="left:1998px;top:530.9px;width:19px;height:2px;background:#c99af0"></div><div class="a" style="left:1998px;top:674.5px;width:19px;height:2px;background:#c99af0"></div><div class="a" style="left:1998px;top:702.0px;width:19px;height:2px;background:#c99af0"></div><div class="a" style="left:1998px;top:918.7px;width:19px;height:2px;background:#c99af0"></div><div class="a" style="left:1998px;top:1027.4px;width:19px;height:2px;background:#c99af0"></div><div class="a" style="left:1998px;top:557.8px;width:19px;height:2px;background:#e5b80b"></div><div class="a" style="left:1998px;top:585.1px;width:19px;height:2px;background:#e5b80b"></div><div class="a" style="left:1998px;top:910.8px;width:19px;height:2px;background:#e5b80b"></div><div class="a" style="left:1998px;top:1000.0px;width:19px;height:2px;background:#e5b80b"></div><div class="a" style="left:0;top:1300px;width:2048px;height:57px;background:#f2f2f2"></div><div class="a" style="left:0;top:1300px;width:2048px;height:1px;background:#d1d1d1"></div><div class="a" style="left:0;top:1329px;width:2048px;height:1px;background:#d1d1d1"></div><svg style="left:41.5px;top:1307.5px" width="13" height="16" viewBox="0 0 13 16"><circle cx="2.2" cy="2" r="1.8" fill="#6e6e6e"/><circle cx="2.2" cy="14" r="1.8" fill="#6e6e6e"/><circle cx="10.5" cy="5" r="1.8" fill="#6e6e6e"/><path d="M2.2 2 V14 M10.5 5 C10.5 9 2.2 8.5 2.2 13" fill="none" stroke="#6e6e6e" stroke-width="1.8"/></svg><div class="t" style="left:63px;top:1307px;font-size:15.5px;color:#000">Git</div><svg style="left:111.5px;top:1308px" width="14" height="14" viewBox="0 0 14 14"><circle cx="7" cy="7" r="7" fill="#6e6e6e"/><path d="M7 2.8 V7.8" stroke="#f2f2f2" stroke-width="2"/><circle cx="7" cy="10.3" r="1.1" fill="#f2f2f2"/></svg><div class="t" style="left:133.5px;top:1307px;font-size:15.5px;color:#000">Problems</div><svg style="left:229px;top:1308.5px" width="14" height="13" viewBox="0 0 14 13"><path d="M0 1.2 H2.2 M0 6.5 H2.2 M0 11.8 H2.2 M4 1.2 H14 M4 6.5 H14 M4 11.8 H14" stroke="#6e6e6e" stroke-width="1.9"/></svg><div class="t" style="left:250px;top:1307px;font-size:15.5px;color:#000">TODO</div><svg style="left:321px;top:1307.5px" width="16" height="15" viewBox="0 0 16 15"><rect x="0" y="0" width="15.5" height="14.5" fill="#6e6e6e"/><path d="M3 3.5 L6.5 6.8 L3 10" fill="none" stroke="#f2f2f2" stroke-width="1.5"/><path d="M7.5 11.5 H12.5" stroke="#f2f2f2" stroke-width="1.5"/></svg><div class="t" style="left:343.5px;top:1307px;font-size:15.5px;color:#000">Terminal</div><svg style="left:434.5px;top:1306.5px" width="17" height="17" viewBox="0 0 17 17"><path d="M8.5 0.8 L16 4.6 L8.5 8.4 L1 4.6 Z" fill="#6e6e6e"/><path d="M1 8.2 L8.5 12 L16 8.2 M1 11.8 L8.5 15.6 L16 11.8" fill="none" stroke="#6e6e6e" stroke-width="1.6"/></svg><div class="t" style="left:458px;top:1307px;font-size:15.5px;color:#000">Python Packages</div><svg style="left:611px;top:1306.5px" width="17" height="17" viewBox="0 0 17 17"><path d="M4.5 0.8 H12.5 L16.5 8.5 L12.5 16.2 H4.5 L0.5 8.5 Z" fill="#6e6e6e"/><path d="M6.5 4.8 L11.8 8.5 L6.5 12.2 Z" fill="#f2f2f2"/></svg><div class="t" style="left:634px;top:1307px;font-size:15.5px;color:#000">Services</div><svg style="left:16px;top:1335px" width="17" height="17" viewBox="0 0 17 17"><path d="M0.8 4 V16.2 H13" fill="none" stroke="#6e6e6e" stroke-width="1.5"/><rect x="3.8" y="0.8" width="12.4" height="12.4" fill="none" stroke="#6e6e6e" stroke-width="1.5"/></svg><div class="t" style="left:1531.5px;top:1336px;font-size:15.6px;color:#000">56:37 (11 chars)</div><div class="t" style="left:1663px;top:1336px;font-size:15.6px;color:#000">LF</div><div class="t" style="left:1697.5px;top:1336px;font-size:15.6px;color:#000">UTF-8</div><div class="t" style="left:1765px;top:1336px;font-size:15.6px;color:#000">4 spaces</div><div class="t" style="left:1844.5px;top:1336px;font-size:15.6px;color:#000">alphacam</div><div class="t" style="left:1952.5px;top:1336px;font-size:15.6px;color:#000">master</div><svg style="left:1931px;top:1334.5px" width="14" height="17" viewBox="0 0 14 17"><circle cx="2" cy="2" r="1.7" fill="#6e6e6e"/><circle cx="2" cy="15" r="1.7" fill="#6e6e6e"/><circle cx="12" cy="2.5" r="1.7" fill="#6e6e6e"/><path d="M2 2 V15 M12 2.5 C12 8 2 8 2 14" fill="none" stroke="#6e6e6e" stroke-width="1.6"/></svg><svg style="left:2012px;top:1334.5px" width="18" height="16" viewBox="0 0 18 16"><path d="M1 7 V4.2 A3.2 3.2 0 0 1 7.4 4.2 V8" fill="none" stroke="#6e6e6e" stroke-width="1.8"/><rect x="5.5" y="7.6" width="10" height="8" fill="#6e6e6e"/></svg></div></body></html>
